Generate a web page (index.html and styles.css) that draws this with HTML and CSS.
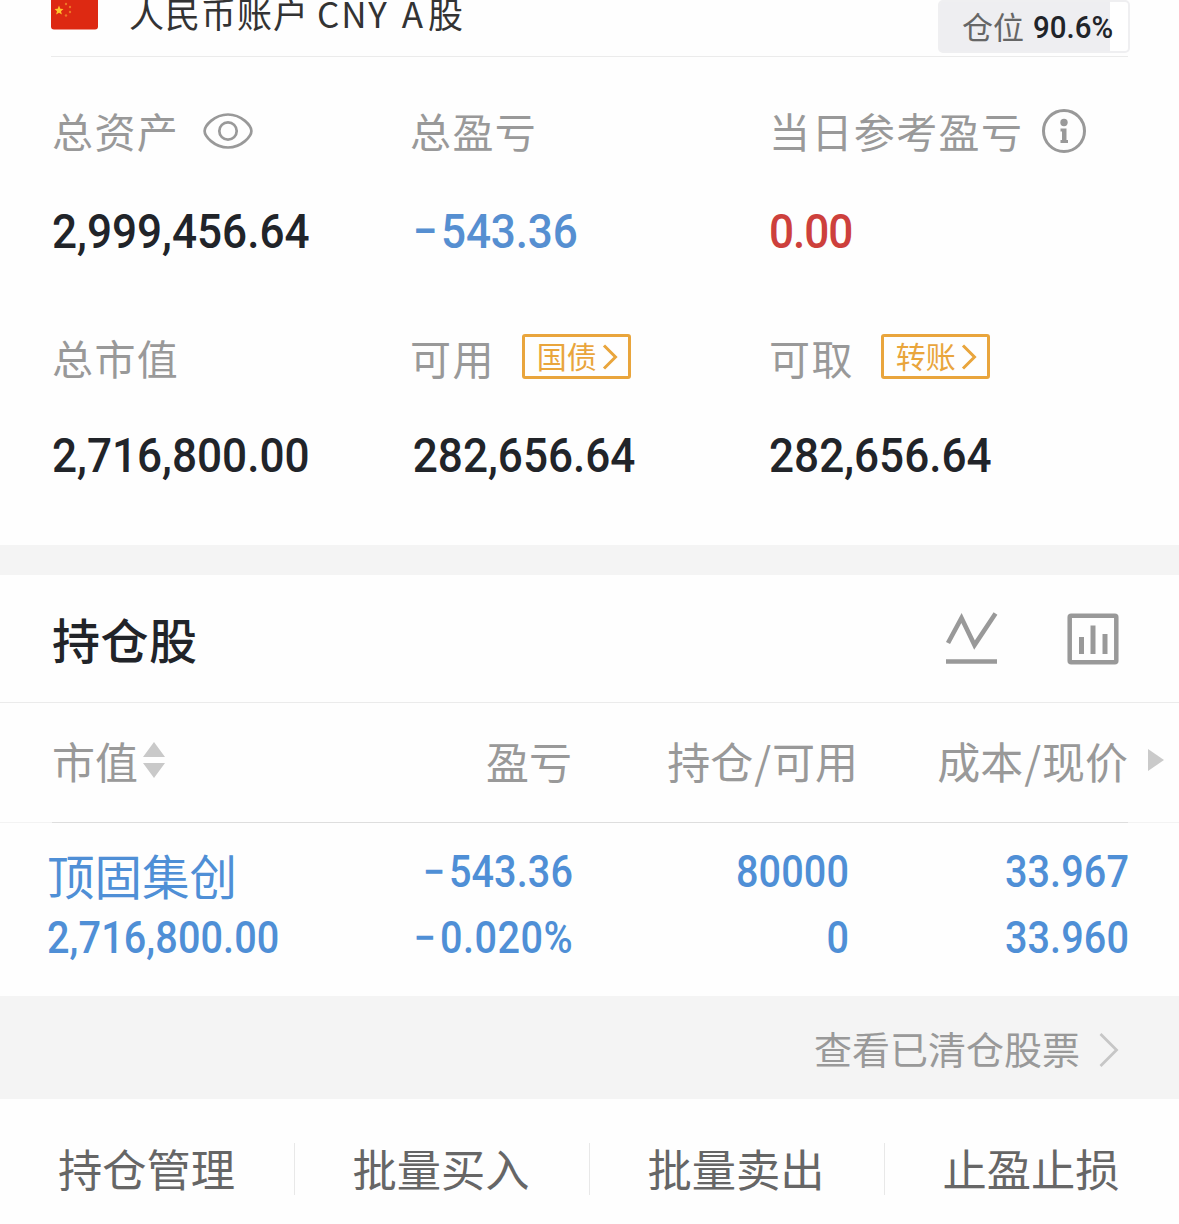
FILE: index.html
```html
<!DOCTYPE html>
<html lang="zh-CN">
<head>
<meta charset="utf-8">
<title>持仓</title>
<link rel="stylesheet" href="styles.css">
</head>
<body>
<main class="page">
  <header class="account">
    <svg class="flag" viewBox="0 0 47 32" width="47" height="32">
      <path d="M0 0H47V28.500Q47 31.500 44 31.500H3Q0 31.500 0 28.500Z" fill="#dd2912"/>
      <path d="M8 7.500L9.300 10.800L12.500 11L10 13.300L10.900 16.500L8 14.700L5.100 16.500L6 13.300L3.500 11L6.700 10.800Z" fill="#ffc52b"/>
      <g fill="#ee7526"><circle cx="15" cy="6" r="1.200"/><circle cx="19" cy="9" r="1.200"/><circle cx="19" cy="14" r="1.200"/><circle cx="15" cy="17.500" r="1.200"/></g>
    </svg>
    <div class="account-name"><span>人民币账户</span><span>CNY</span><span>A</span><span>股</span></div>
    <div class="position"><span class="position-label">仓位</span><span class="position-value">90.6%</span></div>
  </header>

  <section class="stats">
    <div class="stat">
      <div class="label"><span>总资产</span>
        <svg class="eye" width="50" height="38" viewBox="0 0 50 38" fill="none" stroke="#999" stroke-width="2.700"><path d="M1.600 19C1.600 14 11 2.500 25 2.500S48.400 14 48.400 19S39 35.500 25 35.500S1.600 24 1.600 19Z"/><circle cx="25" cy="19" r="8.700"/></svg>
      </div>
      <div class="value">2,999,456.64</div>
    </div>
    <div class="stat">
      <div class="label"><span>总盈亏</span></div>
      <div class="value blue"><span class="minus">−</span>543.36</div>
    </div>
    <div class="stat">
      <div class="label"><span>当日参考盈亏</span>
        <svg class="info" width="46" height="46" viewBox="0 0 46 46"><circle cx="23" cy="23" r="20.500" fill="none" stroke="#999" stroke-width="3"/><circle cx="23" cy="14.500" r="3.700" fill="#999"/><path d="M19.500 20.500H25.500V32H27V35H19.500V32H21V23.500H19.500Z" fill="#999"/></svg>
      </div>
      <div class="value red">0.00</div>
    </div>
    <div class="stat">
      <div class="label"><span>总市值</span></div>
      <div class="value">2,716,800.00</div>
    </div>
    <div class="stat">
      <div class="label"><span>可用</span>
        <a class="tag"><span>国债</span><svg width="16" height="26" viewBox="0 0 16 26" fill="none" stroke="#e9a53c" stroke-width="3"><path d="M2 1.500L13.500 13L2 24.500"/></svg></a>
      </div>
      <div class="value">282,656.64</div>
    </div>
    <div class="stat">
      <div class="label"><span>可取</span>
        <a class="tag"><span>转账</span><svg width="16" height="26" viewBox="0 0 16 26" fill="none" stroke="#e9a53c" stroke-width="3"><path d="M2 1.500L13.500 13L2 24.500"/></svg></a>
      </div>
      <div class="value">282,656.64</div>
    </div>
  </section>

  <div class="band"></div>

  <section class="title-bar">
    <h2 class="title">持仓股</h2>
    <svg width="54" height="54" viewBox="0 0 54 54" fill="none" stroke="#999" stroke-width="4.600"><path d="M3 31L16.500 6L29.500 33L50.500 1.500"/><path d="M1 49.500H52"/></svg>
    <svg class="bars" width="52" height="52" viewBox="0 0 52 52" fill="none" stroke="#999" stroke-width="4.500"><rect x="2.700" y="2.700" width="46.600" height="46.600" rx="1.500"/><path d="M14.500 24V41M26 12.500V41M38 21V41" stroke-width="5"/></svg>
  </section>

  <section class="holdings">
    <div class="row head">
      <div class="cell"><span>市值</span><svg class="sort" width="22" height="36" viewBox="0 0 22 36" fill="#c9c9c9"><path d="M11 0L22 15H0ZM0 21H22L11 36Z"/></svg></div>
      <div class="cell">盈亏</div>
      <div class="cell">持仓<span class="slash">/</span>可用</div>
      <div class="cell">成本<span class="slash">/</span>现价</div>
      <svg class="more" width="16" height="22" viewBox="0 0 16 22" fill="#cacaca"><path d="M0 0L16 11L0 22Z"/></svg>
    </div>
    <div class="row stock">
      <div class="cell"><div class="name">顶固集创</div><div class="num">2,716,800.00</div></div>
      <div class="cell"><div class="num"><span class="minus">−</span>543.36</div><div class="num percent"><span class="minus">−</span>0.020%</div></div>
      <div class="cell"><div class="num">80000</div><div class="num">0</div></div>
      <div class="cell"><div class="num">33.967</div><div class="num">33.960</div></div>
    </div>
  </section>

  <a class="cleared"><span>查看已清仓股票</span><svg width="20" height="34" viewBox="0 0 20 34" fill="none" stroke="#c6c6c6" stroke-width="2.800"><path d="M1.500 1L17.500 17L1.500 33"/></svg></a>

  <nav class="actions">
    <a>持仓管理</a>
    <a>批量买入</a>
    <a>批量卖出</a>
    <a>止盈止损</a>
  </nav>
</main>
</body>
</html>
```
FILE: styles.css
```css
* { box-sizing: border-box; }
body {
  margin: 0;
  background: #fefefe;
  color: #212429;
  font-family: "Noto Sans CJK SC", sans-serif;
}
.page { width: 1179px; height: 1224px; overflow: hidden; }
svg { display: block; flex: none; }

.account {
  display: flex;
  align-items: flex-start;
  height: 57px;
  margin: 0 51px;
  border-bottom: 1px solid #ebebeb;
}
.flag { margin-top: -2px; }
.account-name {
  display: flex;
  margin: -13px 0 0 31px;
  font-size: 35px;
  line-height: 52px;
  letter-spacing: 1px;
  color: #333;
  white-space: nowrap;
}
.account-name span:nth-child(2) { margin-left: 8px; letter-spacing: 1.8px; }
.account-name span:nth-child(3) { margin-left: 13px; }
.account-name span:nth-child(4) { margin-left: 4px; }
.position {
  display: flex;
  align-items: center;
  width: 192px;
  height: 53px;
  margin: 0 -2px 0 auto;
  padding: 0 0 2px 22px;
  border: 2px solid #efeff1;
  border-radius: 5px;
  background: linear-gradient(90deg, #eeeef1 170px, #fff 170px);
  white-space: nowrap;
}
.position-label { font-size: 31px; line-height: 48px; color: #666; }
.position-value {
  margin: 2px 0 0 9px;
  font: 500 32px/48px Roboto, sans-serif;
  transform: scaleX(0.92);
  transform-origin: left;
}

.stats {
  display: grid;
  grid-template-columns: 359px 358px 1fr;
  grid-template-rows: 226px 1fr;
  height: 488px;
  padding: 43px 0 0 52px;
}
.label {
  display: flex;
  align-items: center;
  height: 60px;
  font-size: 41px;
  line-height: 60px;
  letter-spacing: 1.4px;
  color: #999;
  white-space: nowrap;
}
.stat:nth-child(3n + 2) .label { margin-left: -1px; }
.eye { margin: 2px 0 0 24px; }
.info { margin: 2px 0 0 18px; }
.value {
  margin-top: 42px;
  font: 500 49px/60px Roboto, sans-serif;
  transform: scaleX(0.9);
  transform-origin: left;
}
.stat:nth-child(3n + 2) .value { padding-left: 2px; }
.stat:nth-child(n + 4) .label { padding-top: 1px; }
.stat:nth-child(n + 4) .value { margin-top: 40px; }
.minus { margin-right: 4px; }
.blue { color: #568fd1; letter-spacing: -0.2px; }
.red { color: #cd403c; letter-spacing: -1.2px; }
.tag {
  display: flex;
  align-items: center;
  gap: 5px;
  width: 109px;
  height: 45px;
  margin: 0 0 0 27px;
  padding-left: 12px;
  border: 3px solid #e9a53c;
  border-radius: 3px;
  font-size: 30px;
  line-height: 36px;
  letter-spacing: 0;
  color: #e9a53c;
}
.tag span { margin-top: -3px; }

.band { height: 30px; background: #f4f4f4; }

.title-bar {
  display: flex;
  align-items: center;
  height: 128px;
  padding: 0 60px 0 52px;
  border-bottom: 1px solid #ebebeb;
}
.title {
  margin: -1px auto 0 0;
  font-size: 48px;
  line-height: 60px;
  font-weight: 500;
  letter-spacing: 0.5px;
}
.bars { margin-left: 68px; }

.row {
  display: grid;
  grid-template-columns: 280px 240px 276px 280px 1fr;
  padding-left: 52px;
}
.head {
  align-items: center;
  height: 120px;
  padding-bottom: 6px;
  font-size: 43px;
  line-height: 60px;
  color: #999;
  background:
    linear-gradient(#dedede, #dedede) 52px 100% / 1076px 1px no-repeat,
    linear-gradient(#f3f3f3, #f3f3f3) 0 100% / 100% 1px no-repeat;
}
.head .cell, .stock .cell { text-align: right; white-space: nowrap; }
.head .cell:first-child { display: flex; align-items: center; gap: 5px; }
.head .cell:nth-child(3) { margin-right: -10px; }
.slash { padding: 0 1px; }
.more { margin-left: 20px; }
.stock {
  height: 173px;
  padding-top: 15px;
  color: #4f8fd6;
}
.stock .cell:first-child { margin-left: -5px; text-align: left; }
.name { height: 66px; font-size: 47.5px; line-height: 74px; }
.num {
  height: 66px;
  margin-right: -1px;
  font: 500 44px/68px Roboto, sans-serif;
  letter-spacing: 0.1px;
  transform: scaleX(0.9);
  transform-origin: right;
}
.percent { letter-spacing: 0.5px; }
.cell:first-child .num { transform-origin: left; }

.cleared {
  display: flex;
  align-items: center;
  justify-content: flex-end;
  gap: 19px;
  height: 103px;
  padding: 5px 60px 0 0;
  background: #f4f4f4;
  font-size: 38px;
  line-height: 54px;
  color: #999;
}
.cleared span { margin-top: -4px; }

.actions { display: grid; grid-template-columns: repeat(4, 295px); margin-left: -1px; padding-top: 44px; }
.actions a {
  height: 52px;
  font-size: 44.3px;
  line-height: 51px;
  text-align: center;
  color: #666;
}
.actions a + a { padding-right: 2px; border-left: 1px solid #e8e8e8; }
```
